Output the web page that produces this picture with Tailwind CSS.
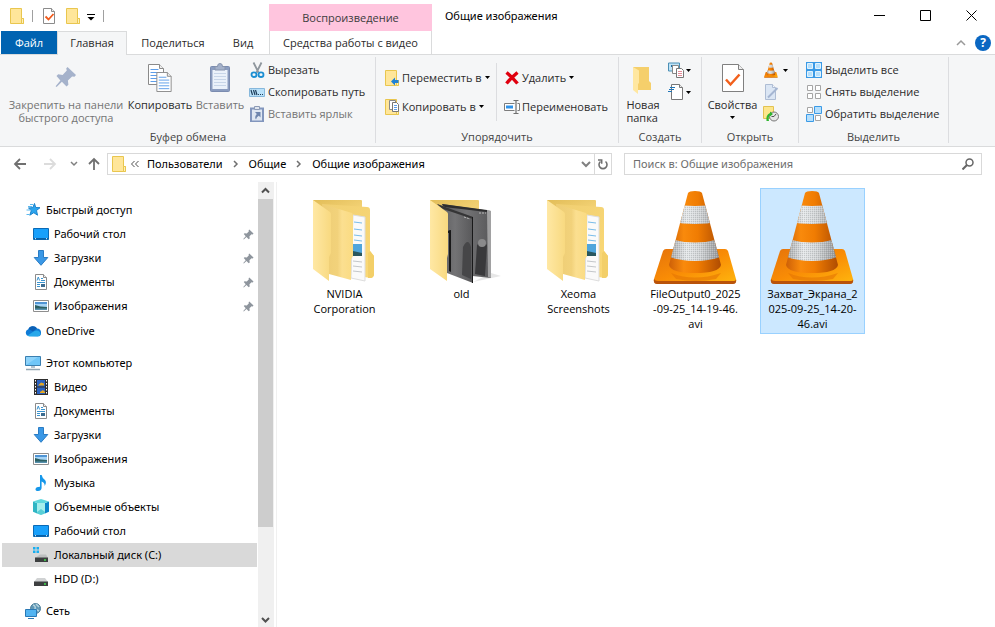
<!DOCTYPE html>
<html lang="ru">
<head>
<meta charset="utf-8">
<title>Общие изображения</title>
<script src="https://cdn.jsdelivr.net/npm/@tailwindcss/browser@4"></script>
</head>
<body class="h-screen flex flex-col bg-white text-black text-[11px] leading-4 overflow-hidden font-['Open_Sans','Noto_Sans',sans-serif]">

<svg class="absolute size-0" aria-hidden="true">
  <defs>
    <linearGradient id="gFold" x1="0" y1="0" x2="1" y2="1"><stop offset="0" stop-color="#f0cf72"/><stop offset="1" stop-color="#fbd976"/></linearGradient>
    <linearGradient id="gLeaf" x1="0" y1="0" x2="1" y2="0"><stop offset="0" stop-color="#ffe8a4"/><stop offset="1" stop-color="#f8d980"/></linearGradient>
    <linearGradient id="gMid" x1="0" y1="0" x2="1" y2="0"><stop offset="0" stop-color="#eecd74"/><stop offset=".5" stop-color="#f2d27b"/><stop offset=".65" stop-color="#fbdf90"/><stop offset="1" stop-color="#fadb82"/></linearGradient>
    <linearGradient id="gBack" x1="0" y1="0" x2="1" y2="1"><stop offset="0" stop-color="#e2bd58"/><stop offset="1" stop-color="#fbdc83"/></linearGradient>
    <linearGradient id="gOr" x1="0" y1="0" x2="1" y2="0"><stop offset="0" stop-color="#c75a07"/><stop offset=".3" stop-color="#f98a0c"/><stop offset=".55" stop-color="#f07c02"/><stop offset="1" stop-color="#a94802"/></linearGradient>
    <linearGradient id="gWh" x1="0" y1="0" x2="1" y2="0"><stop offset="0" stop-color="#9a9c9e"/><stop offset=".35" stop-color="#e4e7e9"/><stop offset=".6" stop-color="#cfd2d4"/><stop offset="1" stop-color="#85878a"/></linearGradient>
    <linearGradient id="gBase" x1="0" y1="0" x2="1" y2="1"><stop offset="0" stop-color="#e5730c"/><stop offset=".5" stop-color="#f98c05"/><stop offset="1" stop-color="#ffb60e"/></linearGradient>
    <linearGradient id="gPhoto" x1="0" y1="0" x2="1" y2="0"><stop offset="0" stop-color="#59595b"/><stop offset=".5" stop-color="#737375"/><stop offset="1" stop-color="#58585a"/></linearGradient>
    <pattern id="mesh" width="2" height="2" patternUnits="userSpaceOnUse"><rect width="1" height="1" fill="#77797b" opacity=".28"/><rect x="1" y="1" width="1" height="1" fill="#fff" opacity=".25"/></pattern>
    <clipPath id="coneClip"><path d="M41 4Q42 2 48 2T55 4L74 76Q72 84 48 84T22 76Z"/></clipPath>

    <symbol id="i-folder" viewBox="0 0 16 16"><path d="M1.5.5h11v10h2v5h-13z" fill="#ffe69a" stroke="#e9c64e"/><path d="M12.5 15.500v-5h2v5z" fill="#fff0b8" stroke="#e9c64e"/></symbol>
    <symbol id="i-check" viewBox="0 0 16 16"><path d="M2.500.5h8l3 3v12h-11z" fill="#fff" stroke="#8b8b8b"/><path d="M10.500.5v3h3" fill="#eee" stroke="#8b8b8b"/><path d="M4.500 8.500l3 3 5-5.500" fill="none" stroke="#f05a1c" stroke-width="1.800"/></symbol>
    <symbol id="i-pin" viewBox="0 0 22 22"><path d="M12.500 1l8.500 8-1.500 1.800-2.400-.4-4.200 4.200.5 4.200-1.900 1.600-4.600-4.600L1.600 21 .6 20.200l4.800-5.700L1.500 10l1.700-1.700 4.400.6 4.200-4.300-.6-2.200z"/></symbol>
    <symbol id="i-paper" viewBox="0 0 16 21"><path d="M.5.5h11l4 4v16H.5z" fill="#fff" stroke="#8a8a8a"/><path d="M11.500.5v4h4" fill="#eee" stroke="#8a8a8a"/><path d="M2.500 5.500h8M2.500 8.500h11M2.500 11.500h11M2.500 14.500h11M2.500 17.500h11" stroke="#5d9eea"/></symbol>
    <symbol id="i-clip" viewBox="0 0 20 29"><rect x=".5" y="3.500" width="19" height="25" rx="1" fill="#8b9dc0" stroke="#7b8cb0"/><path d="M2.500 7h15v19h-15z" fill="#eaf1fa"/><path d="M4 10.500h12M4 13.500h12M4 16.500h12M4 19.500h12M4 22.500h12" stroke="#c7d5e8"/><path d="M5 7V3.500h2.500a2.500 3 0 0 1 5 0H15V7z" fill="#a4b1ca" stroke="#8794ae"/></symbol>
    <symbol id="i-cut" viewBox="0 0 16 16"><path d="M4.500.5l5 10M12.500.5l-5 10" stroke="#8f979e" stroke-width="1.800" fill="none"/><ellipse cx="5" cy="12.700" rx="2.500" ry="2.300" fill="none" stroke="#1b8ed2" stroke-width="1.800"/><ellipse cx="12" cy="12.700" rx="2.500" ry="2.300" fill="none" stroke="#1b8ed2" stroke-width="1.800"/></symbol>
    <symbol id="i-path" viewBox="0 0 16 16"><path d="M.5 4.500h15v8H.5z" fill="#b9e1fa" stroke="#87b8dc"/><path d="M2 6l1.500 5M4.500 6L6 11M6.500 6L8 11" stroke="#1f3f5c" stroke-width="1.200"/><path d="M9 10.500h1M11 10.500h1M13 10.500h1" stroke="#1f3f5c"/></symbol>
    <symbol id="i-short" viewBox="0 0 16 16"><path d="M2 2.500h12v13H2z" fill="#dfe7f2" stroke="#8296bd" stroke-width="2"/><path d="M5.500.5h5v3h-5z" fill="#dfe5ee" stroke="#8c9ab5"/><path d="M6 6h5.500v5.500L9.800 9.800Q7.500 11 7 13.500 5 11 7.800 7.900z" fill="#6f86ae"/></symbol>
    <symbol id="i-move" viewBox="0 0 16 16"><use href="#i-folder" width="16" height="16" x="-1"/><path d="M6 11.500l4-4v2.500h3.500v3H10v2.500z" fill="#1f82d4"/></symbol>
    <symbol id="i-copyto" viewBox="0 0 16 16"><use href="#i-folder" width="16" height="16" x="-1"/><path d="M4.500 1.500h6v9h-6z" fill="#fff" stroke="#8a8a8a"/><path d="M7.500 3.500h4l2 2v7h-6z" fill="#fff" stroke="#777"/><path d="M9 6.500h3M9 8.500h3M9 10.500h3" stroke="#5d9eea"/></symbol>
    <symbol id="i-del" viewBox="0 0 16 16"><path d="M2.500 2.500Q8 7 13.500 13.500M13.500 2.500Q8 7 2.500 13.500" fill="none" stroke="#e0000f" stroke-width="3.400"/></symbol>
    <symbol id="i-ren" viewBox="0 0 16 16"><path d="M10.500 4.500H.5v7h10M13.500 4.500h2v7h-2" fill="#fff" stroke="#7c7c7c"/><path d="M2 6.500h7v3H2z" fill="#2f93ea"/><path d="M9.500 1.500h5M9.500 14.500h5M12 1.500v13" stroke="#707070" stroke-width="1.200"/></symbol>
    <symbol id="i-newf" viewBox="0 0 20 28"><path d="M0 1h16v14l2 2v7H5z" fill="#f5cf6b"/><path d="M0 1l6 3.500V17l-1 1v10l-5-4z" fill="#ffe7a0"/></symbol>
    <symbol id="i-newitem" viewBox="0 0 16 16"><path d="M.5 1h11v8H.500z" fill="#bfe3f6" stroke="#4b8fb5"/><path d="M3 4h6" stroke="#1f6fa5" stroke-width="2"/><path d="M4.500 3.500h6v8h-6z" fill="#fff" stroke="#888"/><path d="M8.500 6.500h5l2 2v7h-7z" fill="#fff" stroke="#777"/><path d="M10 9.500h4M10 11.500h4M10 13.500h4" stroke="#e48b98"/></symbol>
    <symbol id="i-easy" viewBox="0 0 16 16"><path d="M3.500.5h8l3 3v12h-11z" fill="#fff" stroke="#777"/><path d="M11.500.5v3h3" fill="#eee" stroke="#777"/><path d="M2 3.500h5M1 5.500h5M0 7.500h4" stroke="#2176b8"/></symbol>
    <symbol id="i-edit" viewBox="0 0 16 16"><path d="M2.500.5h7l3 3v12h-10z" fill="#dbe6f4" stroke="#aebdd4"/><path d="M9.500.5v3h3" fill="#f5f8fc" stroke="#aebdd4"/><path d="M5 13.500L14.500 4" stroke="#a5b6d2" stroke-width="2"/></symbol>
    <symbol id="i-hist" viewBox="0 0 16 16"><path d="M.5.5h10v12H.500z" fill="#fde68c" stroke="#e2c252"/><circle cx="11" cy="10.500" r="4.500" fill="#e6e6e6" stroke="#777"/><path d="M11 10.500l2-2.500M11 10.500H8.500" stroke="#555"/><path d="M3.500 15Q2.500 9 7 7V5.500L10 8l-3 2.500V9Q5 11 6 15z" fill="#2fb52f"/></symbol>
    <symbol id="i-all" viewBox="0 0 16 16"><path d="M0 0h16v16H0z" fill="#3a9ae6"/><path d="M1.500 1.500h5v5h-5zM9.500 1.500h5v5h-5zM1.500 9.500h5v5h-5zM9.500 9.500h5v5h-5z" fill="#b5dffc" stroke="#e2f3fd"/></symbol>
    <symbol id="i-none" viewBox="0 0 16 16"><path d="M1.500 1.500h5v5h-5zM9.500 1.500h5v5h-5zM1.500 9.500h5v5h-5zM9.500 9.500h5v5h-5z" fill="#fff" stroke="#a5a5a5"/></symbol>
    <symbol id="i-inv" viewBox="0 0 16 16"><path d="M1.500 1.500h5v5h-5zM9.500 9.500h5v5h-5z" fill="#fff" stroke="#a5a5a5"/><path d="M8.500.5h7v7h-7zM.5 8.500h7v7h-7z" fill="#b5dffc" stroke="#3a9ae6"/></symbol>

    <symbol id="i-star" viewBox="0 0 16 16"><path d="M9.500 1.500l1.200 4 4.300.2-3.500 2.800 1 4.700-3.700-2.500-4 2.500 1.500-4.600L3.500 6l4.300-.4z" fill="#2ba5ee" stroke="#1a82cc"/><path d="M3 4.500h4M1.500 8h4M1.500 12.500h3M5 2.500h3" stroke="#5cb9ee"/></symbol>
    <symbol id="i-desk" viewBox="0 0 16 16"><path d="M.5 2.500h15v11H.5z" fill="#18a0fb" stroke="#0a6ab6"/><path d="M1 12h14v1.500H1z" fill="#0860a6"/><path d="M2 12.700h1M13 12.700h1" stroke="#fff"/></symbol>
    <symbol id="i-down" viewBox="0 0 16 16"><path d="M5.500.5h5v7h4.300L8 15.300 1.200 7.500h4.300z" fill="#3a98e6" stroke="#2a7cc4"/></symbol>
    <symbol id="i-doc" viewBox="0 0 16 16"><path d="M2.500.5h8l3 3v12h-11z" fill="#fff" stroke="#8b8b8b"/><path d="M10.500.5v3h3" fill="#eee" stroke="#8b8b8b"/><path d="M4 6.500l1.300-3.500L6.600 6.500M8 4.500h2M8 6.500h4M4 8.500h8M4 10.500h3M4 12.500h3" fill="none" stroke="#3b94cf"/><path d="M8 10h4v3H8z" fill="#3c6c90"/></symbol>
    <symbol id="i-img" viewBox="0 0 16 16"><path d="M.5 2.500h15v11H.5z" fill="#fff" stroke="#8e8e8e"/><path d="M2 4h12v8H2z" fill="#a5d3f5"/><path d="M2 4h12v2H2z" fill="#4f94d4"/><path d="M2 7q5 2 12 2v3H2z" fill="#2c6063"/><path d="M2 10.500h12V12H2z" fill="#5791ae"/></symbol>
    <symbol id="i-cloud" viewBox="0 0 16 16"><path d="M4 13a3.500 3.500 0 0 1-.8-6.800A5 5 0 0 1 12 5.500a4 4 0 0 1 4 4.500 3.200 3.200 0 0 1-3 3.300z" fill="#0f7bd6"/><path d="M3.500 6A5 5 0 0 1 12 5.300L8 8.500z" fill="#0c5fb4"/><path d="M2.500 12.500L9.500 8a4 4 0 0 1 6 3q-.5 2.400-2.800 2.400H4z" fill="#28a8ea"/></symbol>
    <symbol id="i-pc" viewBox="0 0 16 16"><path d="M.5 1.500h15v9H.5z" fill="#6fc6f8" stroke="#3a7fb0"/><path d="M1 10V2h12z" fill="#a3dcfb" opacity=".6"/><path d="M6 11h4v2H6z" fill="#b3c3cf"/><path d="M1 14.500h14" stroke="#93a6b3" stroke-width="1.500"/></symbol>
    <symbol id="i-vid" viewBox="0 0 16 16"><path d="M1 0h14v16H1z" fill="#2e2e2e"/><path d="M4 1h8v6.500H4zM4 8.500h8V15H4z" fill="#2b62c0"/><path d="M5 6.500l3-3 3 1v2zM7 13l3-2 2 2v1H7z" fill="#e6a821"/><path d="M2.500 1v15M13.500 1v15" stroke="#fff" stroke-dasharray="1.500 1.500"/></symbol>
    <symbol id="i-mus" viewBox="0 0 16 16"><path d="M7 0h1.600q.6 3 3.400 5 2 2.500-.4 6 .4-3.500-3-4.600V13q-.3 2.800-3.600 3-2.700 0-2.500-2 .6-2.200 4.500-2.200z" fill="#1597ea"/></symbol>
    <symbol id="i-cube" viewBox="0 0 16 16"><path d="M0 2.500L4 4v10.500l-4-1.700z" fill="#2fb5c4"/><path d="M12 4l4-1.500v10.300L12 14.500z" fill="#0a84c8"/><path d="M0 2.500L8 0l8 2.500-4 1.500H4z" fill="#5fd8de"/><path d="M4 4h8v9.500L8 16l-4-2z" fill="#a6eeec"/><path d="M4 13l4-3 4 3v1.500L8 16l-4-1.500z" fill="#58cfd6"/></symbol>
    <symbol id="i-drive" viewBox="0 0 16 16"><path d="M4 7h8l3 4H1z" fill="#d0d2d3"/><path d="M1 10.500h14V15H1z" fill="#3d3f40"/><path d="M11 13h2" stroke="#41e04e" stroke-width="1.500"/></symbol>
    <symbol id="i-win" viewBox="0 0 16 16"><path d="M0 0h2.500v2.500H0zM3.500 0H6v2.500H3.500zM0 3.500h2.500V6H0zM3.500 3.500H6V6H3.500z" fill="#18aef0"/><path d="M7 7.500h6l2 3.500H2z" fill="#bdbfc0"/><path d="M2 10.500h13V15H2z" fill="#3d3f40"/><path d="M11 13h2" stroke="#41e04e" stroke-width="1.500"/></symbol>
    <symbol id="i-net" viewBox="0 0 16 16"><circle cx="10.500" cy="5.500" r="5" fill="#5f97b5" stroke="#4d7f9a"/><path d="M8 2q3 1 2 4l4 2M11 1l3 3" stroke="#b5d3de" stroke-width="1.500" fill="none"/><path d="M.5 6.500h11v7H.5z" fill="#52b4f2" stroke="#2a78b4"/><path d="M3 15.500h6" stroke="#2a78b4"/></symbol>

    <symbol id="i-cone" viewBox="0 0 97 97">
      <path d="M19 60h59q2 0 3 2l8 28q1 4-3 4H10q-4 0-3-4l9-28q1-2 3-2z" fill="url(#gBase)"/>
      <path d="M7 90q1 2 4 2h75q3 0 3-2 1 5-3 5H10q-4 0-3-5z" fill="#b9530a"/>
      <path d="M24 84q23 9 50 0l-5 6q-20 4-40 0z" fill="#e57504" opacity=".6"/>
      <g clip-path="url(#coneClip)"><path d="M20 0h56v86H20z" fill="url(#gOr)"/>
      <path d="M20 15q28 4 56 0v17q-28 6-56 0z" fill="url(#gWh)"/><path d="M20 49q28 9 56 0v18q-28 10-56 0z" fill="url(#gWh)"/>
      <path d="M20 15q28 4 56 0v17q-28 6-56 0zM20 49q28 9 56 0v18q-28 10-56 0z" fill="url(#mesh)"/></g>
    </symbol>
    <symbol id="i-docs" viewBox="0 0 97 97">
      <path d="M17 11h48q1 0 1 1v20H17z" fill="url(#gBack)"/>
      <path d="M26 15l45 3q3 0 3 3v41l4 5v18q0 3-3 4l-20-3z" fill="url(#gFold)"/>
      <path d="M74 62l4 5v18q0 3-3 4l-3 0V64z" fill="#f3cf68"/>
      <path d="M57 26l12 2v64l-14-3z" fill="#fafafa" stroke="#ddd"/>
      <path d="M58 33l8 1M58 40l8 1M58 46l8 1M58 51l8 1" stroke="#79bce9"/><path d="M57 55h9v12h-9z" fill="#4fa5dc"/><path d="M57 62l9 2v3h-9z" fill="#29575f"/><path d="M57 72l9 1M57 77l9 1M57 82l9 1" stroke="#c4c7ca"/>
      <path d="M26 15l30 9q1 1 1 3v40l-2 3v21l-22-6z" fill="url(#gMid)"/>
      <path d="M17 11l17 12q1 1 1 2v39l-2 4v24L17 80z" fill="url(#gLeaf)"/>
    </symbol>
    <symbol id="i-photos" viewBox="0 0 97 97">
      <path d="M60 93l28-6-10-3z" fill="#ddd" opacity=".7"/>
      <path d="M17 11h48q1 0 1 1v20H17z" fill="url(#gBack)"/>
      <path d="M29 15l49 7v67l-28-3z" fill="url(#gPhoto)"/><path d="M74 21l4 1v67l-3-1z" fill="#a1a1a2"/>
      <path d="M29 15l45 6v2l-43-5z" fill="#2d2d2e"/><path d="M64 56q5-6 10 0l-2 31-10-2z" fill="#39393b"/><circle cx="69" cy="54" r="4" fill="#8a8a8b"/><path d="M66 24h7" stroke="#bbb" stroke-dasharray="2 1"/>
      <path d="M24 15l36 13v66L34 84V25z" fill="url(#gPhoto)"/><path d="M24 15l36 13v2L30 20z" fill="#353536"/><path d="M34 45q0-4 4-4v42l-2-1V44h-2zM59 28h1v66h-1z" fill="#19191a"/>
      <path d="M50 58q5-10 8 0v32l-9-4z" fill="#464648"/><path d="M51 28l6 2" stroke="#bbb" stroke-dasharray="2 1"/>
      <path d="M17 11l17 12q1 1 1 2v40l-1 4v23L17 80z" fill="url(#gLeaf)"/>
    </symbol>
  </defs>
</svg>

<header class="grid grid-cols-[268px_164px_1fr] grid-rows-[31px_23px]">
  <div class="flex items-center gap-2 pl-[9px] [&_svg]:size-4">
    <button aria-label="Меню окна"><svg><use href="#i-folder"/></svg></button>
    <span class="-ml-px h-3 w-px bg-[#a0a0a0]"></span>
    <button aria-label="Свойства"><svg><use href="#i-check"/></svg></button>
    <button aria-label="Новая папка"><svg><use href="#i-folder"/></svg></button>
    <button aria-label="Настройка панели быстрого доступа" class="-ml-1.5"><svg viewBox="0 0 16 16"><path d="M4 6.500h8" stroke="#000"/><path d="M4.500 9h7L8 12.500z"/></svg></button>
    <span class="-ml-1 h-3 w-px bg-[#a0a0a0]"></span>
  </div>
  <div class="mt-1 ml-px flex items-center justify-center bg-[#ffc5de] text-[#3c3c3c] pt-px">Воспроизведение</div>
  <div class="flex pr-px">
    <h1 class="flex-1 self-center pl-[13px] font-['Noto_Sans']">Общие изображения</h1>
    <button aria-label="Свернуть" class="flex w-[46px] items-center justify-center"><svg class="size-[11px]" viewBox="0 0 11 11"><path d="M0 5.500h11" stroke="#000"/></svg></button>
    <button aria-label="Развернуть" class="flex w-[46px] items-center justify-center"><svg class="size-[11px]" viewBox="0 0 11 11"><path d="M.5.5h10v10H.5z" fill="none" stroke="#000"/></svg></button>
    <button aria-label="Закрыть" class="flex w-[46px] items-center justify-center"><svg class="size-[11px]" viewBox="0 0 11 11"><path d="M.5.500l10 10M10.500.500l-10 10" stroke="#000"/></svg></button>
  </div>
  <nav class="flex pl-px text-[#2b2b2b]">
    <button class="w-14 bg-[#0063b1] text-white">Файл</button>
    <button class="relative -mb-px w-[70px] border border-b-0 border-[#dadbdc] bg-[#f5f6f7] pb-px">Главная</button>
    <button class="w-[92px]">Поделиться</button>
    <button class="w-12">Вид</button>
  </nav>
  <button class="ml-px border-x border-[#dadbdc] text-[#2b2b2b]">Средства работы с видео</button>
  <div class="flex items-center justify-end gap-2 pr-1">
    <button aria-label="Свернуть ленту"><svg class="size-3" viewBox="0 0 12 12"><path d="M2 8l4-4 4 4" fill="none" stroke="#999" stroke-width="1.500"/></svg></button>
    <button aria-label="Справка" class="flex size-4 items-center justify-center rounded-full bg-[#0a67c2] text-[12px] font-bold text-white">?</button>
  </div>
</header>

<section aria-label="Главная" class="flex border-y border-[#dadbdc] bg-[#f5f6f7] pl-px pt-0.5 pb-[3px] text-[#2b2b2b] [&_button]:whitespace-nowrap [&_h2]:text-center [&_h2]:leading-[13px] [&_h2]:text-[#444]">
  <div class="flex w-[375px] flex-col border-r border-[#dcdde0]">
    <div class="flex h-[73px] pl-[3px]">
      <button class="flex w-[124px] flex-col items-center pt-1 text-[#747474] leading-[13px]"><svg class="mt-[5px] mb-[10px] size-[22px] fill-[#a5b2cb]"><use href="#i-pin"/></svg>Закрепить на панели<br>быстрого доступа</button>
      <button class="flex w-16 flex-col items-center pt-1 leading-[13px]"><svg class="mt-px mb-1 h-8 w-6" viewBox="0 0 24 32"><use href="#i-paper" x="0" y="2" width="16" height="21"/><use href="#i-paper" x="8" y="10" width="16" height="20"/></svg>Копировать</button>
      <button class="flex w-14 flex-col items-center pt-1 text-[#747474] leading-[13px]"><svg class="mt-px mb-1 h-8 w-5" viewBox="0 0 20 32"><use href="#i-clip" y="1" width="20" height="29"/></svg>Вставить</button>
      <div class="flex flex-col pt-0.5 pl-px [&_button]:flex [&_button]:h-[22px] [&_button]:items-center [&_button]:gap-[3px] [&_svg]:size-4">
        <button><svg><use href="#i-cut"/></svg>Вырезать</button>
        <button><svg><use href="#i-path"/></svg>Скопировать путь</button>
        <button class="text-[#747474]"><svg><use href="#i-short"/></svg>Вставить ярлык</button>
      </div>
    </div>
    <h2>Буфер обмена</h2>
  </div>
  <div class="flex w-[243px] flex-col border-r border-[#dcdde0]">
    <div class="flex h-[73px] items-start pt-1.5 [&_button]:flex [&_button]:h-[29px] [&_button]:items-center">
      <div class="w-[121px] border-r border-[#dcdde0] pl-[9px]">
        <button><svg class="mr-px size-4"><use href="#i-move"/></svg>Переместить в<svg class="ml-[3px] h-[3px] w-[5px]" viewBox="0 0 5 3"><path d="M0 0h5L2.500 3z"/></svg></button>
        <button><svg class="mr-px size-4"><use href="#i-copyto"/></svg>Копировать в<svg class="ml-[3px] h-[3px] w-[5px]" viewBox="0 0 5 3"><path d="M0 0h5L2.500 3z"/></svg></button>
      </div>
      <div class="pl-[7px]">
        <button><svg class="mr-0.5 size-4"><use href="#i-del"/></svg>Удалить<svg class="ml-[3px] h-[3px] w-[5px]" viewBox="0 0 5 3"><path d="M0 0h5L2.500 3z"/></svg></button>
        <button><svg class="mr-0.5 size-4"><use href="#i-ren"/></svg>Переименовать</button>
      </div>
    </div>
    <h2>Упорядочить</h2>
  </div>
  <div class="flex w-[83px] flex-col border-r border-[#dcdde0]">
    <div class="flex h-[73px]">
      <button class="flex w-12 flex-col items-center pt-1 leading-[13px]"><svg class="mt-[5px] mb-1 h-7 w-5"><use href="#i-newf"/></svg><span class="text-left">Новая<br>папка</span></button>
      <div class="pt-0.5 pl-px [&_button]:flex [&_button]:h-[22px] [&_button]:items-center [&_button]:gap-0.5">
        <button aria-label="Создать элемент"><svg class="size-4"><use href="#i-newitem"/></svg><svg class="h-[3px] w-[5px]" viewBox="0 0 5 3"><path d="M0 0h5L2.500 3z"/></svg></button>
        <button aria-label="Простой доступ"><svg class="size-4"><use href="#i-easy"/></svg><svg class="h-[3px] w-[5px]" viewBox="0 0 5 3"><path d="M0 0h5L2.500 3z"/></svg></button>
      </div>
    </div>
    <h2>Создать</h2>
  </div>
  <div class="flex w-[97px] flex-col border-r border-[#dcdde0]">
    <div class="flex h-[73px]">
      <button class="flex w-[61px] flex-col items-center pt-1 leading-[13px]"><svg class="mt-px mb-1 h-8 w-[22px]" viewBox="0 0 22 32"><path d="M.5 2.500h16l5 5v22H.5z" fill="#fff" stroke="#808080"/><path d="M16.500 2.500v5h5" fill="#eee" stroke="#808080"/><path d="M4 17.500l4.500 5 9-10" fill="none" stroke="#f2601c" stroke-width="2.500"/></svg>Свойства<svg class="mt-[5px] h-[3px] w-[5px]" viewBox="0 0 5 3"><path d="M0 0h5L2.500 3z"/></svg></button>
      <div class="pt-0.5 [&_button]:flex [&_button]:h-[22px] [&_button]:items-center [&_button]:gap-1">
        <button aria-label="Открыть"><svg class="size-4"><use href="#i-cone"/></svg><svg class="h-[3px] w-[5px]" viewBox="0 0 5 3"><path d="M0 0h5L2.500 3z"/></svg></button>
        <button aria-label="Изменить"><svg class="size-4"><use href="#i-edit"/></svg></button>
        <button aria-label="Журнал"><svg class="size-4"><use href="#i-hist"/></svg></button>
      </div>
    </div>
    <h2>Открыть</h2>
  </div>
  <div class="flex w-[150px] flex-col border-r border-[#dcdde0]">
    <div class="h-[73px] pt-0.5 pl-[7px] [&_button]:flex [&_button]:h-[22px] [&_button]:items-center [&_button]:gap-[3px] [&_svg]:size-4">
      <button><svg><use href="#i-all"/></svg>Выделить все</button>
      <button><svg><use href="#i-none"/></svg>Снять выделение</button>
      <button><svg><use href="#i-inv"/></svg>Обратить выделение</button>
    </div>
    <h2>Выделить</h2>
  </div>
</section>

<div class="flex items-center gap-3 py-1.5 pr-[13px] pl-3 font-['Noto_Sans']">
  <div class="flex w-[83px] items-center">
    <button aria-label="Назад"><svg class="size-4" viewBox="0 0 16 16"><path d="M14 8H3M8 3L3 8l5 5" fill="none" stroke="#707070" stroke-width="1.800"/></svg></button>
    <button aria-label="Вперёд" class="ml-3.5"><svg class="size-4" viewBox="0 0 16 16"><path d="M2 8h11M8 3l5 5-5 5" fill="none" stroke="#dcdcdc" stroke-width="1.800"/></svg></button>
    <button aria-label="Последние расположения" class="ml-3"><svg class="size-2" viewBox="0 0 8 8"><path d="M1 2l3 3 3-3" fill="none" stroke="#808080" stroke-width="1.500"/></svg></button>
    <button aria-label="Вверх" class="ml-2"><svg class="size-4" viewBox="0 0 16 16"><path d="M8 14V3M3 8l5-5 5 5" fill="none" stroke="#707070" stroke-width="1.800"/></svg></button>
  </div>
  <div class="flex h-[22px] flex-[503] items-center border border-[#d9d9d9]">
    <svg class="ml-[3px] size-4"><use href="#i-folder"/></svg>
    <svg class="ml-1 size-2" viewBox="0 0 8 8"><path d="M3.500 1l-3 3 3 3M7.500 1l-3 3 3 3" fill="none" stroke="#505050"/></svg>
    <a href="#" class="ml-2">Пользователи</a>
    <svg class="ml-[9px] size-2" viewBox="0 0 8 8"><path d="M2 1l3 3-3 3" fill="none" stroke="#707070" stroke-width="1.500"/></svg>
    <a href="#" class="ml-[9px]">Общие</a>
    <svg class="ml-[9px] size-2" viewBox="0 0 8 8"><path d="M2 1l3 3-3 3" fill="none" stroke="#707070" stroke-width="1.500"/></svg>
    <a href="#" class="ml-[9px]">Общие изображения</a>
    <button aria-label="Предыдущие расположения" class="ml-auto px-0.5"><svg class="size-3" viewBox="0 0 12 12"><path d="M2 4l4 4 4-4" fill="none" stroke="#808080" stroke-width="2"/></svg></button>
    <button aria-label="Обновить" class="self-stretch border-l border-[#d9d9d9] px-0.5"><svg class="size-3" viewBox="0 0 12 12"><path d="M3.500 3.500A4 4 0 1 0 8.500 3.500" fill="none" stroke="#707070" stroke-width="1.600"/><path d="M1 2h3.700v3.700" fill="none" stroke="#707070" stroke-width="1.500"/></svg></button>
  </div>
  <div class="flex h-[22px] flex-[341] items-center border border-[#d9d9d9] pr-[7px] pl-2">
    <input type="text" aria-label="Поиск" placeholder="Поиск в: Общие изображения" class="min-w-0 flex-1 outline-none placeholder:text-[#6d6d6d]">
    <svg class="size-3" viewBox="0 0 12 12"><circle cx="7.500" cy="4.500" r="3.500" fill="none" stroke="#666" stroke-width="1.500"/><path d="M5 7L.5 11.500" stroke="#666" stroke-width="2"/></svg>
  </div>
</div>

<main class="flex min-h-0 flex-1 pt-px">
  <nav class="flex w-[258px] flex-col pt-4 pl-0.5 pr-px font-['Noto_Sans'] [&_a]:flex [&_a]:h-6 [&_a]:shrink-0 [&_a]:items-center [&_a]:gap-[5px] [&_a>svg:first-child]:size-4" aria-label="Область навигации">
    <a href="#" class="pl-[23px]"><svg><use href="#i-star"/></svg>Быстрый доступ</a>
    <a href="#" class="pl-[31px] pr-[3px]"><svg><use href="#i-desk"/></svg>Рабочий стол<svg class="ml-auto size-[11px] fill-[#8e959d]"><use href="#i-pin" width="11" height="11"/></svg></a>
    <a href="#" class="pl-[31px] pr-[3px]"><svg><use href="#i-down"/></svg>Загрузки<svg class="ml-auto size-[11px] fill-[#8e959d]"><use href="#i-pin" width="11" height="11"/></svg></a>
    <a href="#" class="pl-[31px] pr-[3px]"><svg><use href="#i-doc"/></svg>Документы<svg class="ml-auto size-[11px] fill-[#8e959d]"><use href="#i-pin" width="11" height="11"/></svg></a>
    <a href="#" class="pl-[31px] pr-[3px]"><svg><use href="#i-img"/></svg>Изображения<svg class="ml-auto size-[11px] fill-[#8e959d]"><use href="#i-pin" width="11" height="11"/></svg></a>
    <a href="#" class="mt-px pl-[23px]"><svg><use href="#i-cloud"/></svg>OneDrive</a>
    <a href="#" class="mt-2 pl-[23px]"><svg><use href="#i-pc"/></svg>Этот компьютер</a>
    <a href="#" class="pl-[31px]"><svg><use href="#i-vid"/></svg>Видео</a>
    <a href="#" class="pl-[31px]"><svg><use href="#i-doc"/></svg>Документы</a>
    <a href="#" class="pl-[31px]"><svg><use href="#i-down"/></svg>Загрузки</a>
    <a href="#" class="pl-[31px]"><svg><use href="#i-img"/></svg>Изображения</a>
    <a href="#" class="pl-[31px]"><svg><use href="#i-mus"/></svg>Музыка</a>
    <a href="#" class="pl-[31px]"><svg><use href="#i-cube"/></svg>Объемные объекты</a>
    <a href="#" class="pl-[31px]"><svg><use href="#i-desk"/></svg>Рабочий стол</a>
    <a href="#" class="bg-[#d9d9d9] pl-[31px]" aria-current="true"><svg><use href="#i-win"/></svg>Локальный диск (C:)</a>
    <a href="#" class="pl-[31px]"><svg><use href="#i-drive"/></svg>HDD (D:)</a>
    <a href="#" class="mt-2 pl-[23px]"><svg><use href="#i-net"/></svg>Сеть</a>
  </nav>
  <div class="flex w-4 flex-col items-center bg-[#f0f0f0]">
    <svg class="h-[17px] w-4 shrink-0" viewBox="0 0 16 17"><path d="M4 10.500l3.500-3.500 3.500 3.500" fill="none" stroke="#505050" stroke-width="2"/></svg>
    <div class="w-[15px] flex-[328] self-start bg-[#cdcdcd]"></div>
    <div class="flex-[83]"></div>
    <svg class="h-[17px] w-4 shrink-0" viewBox="0 0 16 17"><path d="M4 8l3.500 3.500L11 8" fill="none" stroke="#505050" stroke-width="2"/></svg>
  </div>
  <ul class="ml-0.5 grid flex-1 auto-rows-min grid-cols-[repeat(auto-fill,105px)] items-start gap-x-3 border-l border-[#f0f0f0] pt-1.5 pl-[15px] text-center leading-[15px] [&_li]:flex [&_li]:flex-col [&_li]:items-center [&_li]:border [&_li]:pb-0.5 [&_svg]:size-[97px]">
    <li class="border-transparent"><svg><use href="#i-docs"/></svg>NVIDIA<br>Corporation</li>
    <li class="border-transparent"><svg><use href="#i-photos"/></svg>old</li>
    <li class="border-transparent"><svg><use href="#i-docs"/></svg>Xeoma<br>Screenshots</li>
    <li class="border-transparent"><svg><use href="#i-cone"/></svg>FileOutput0_2025<br>-09-25_14-19-46.<br>avi</li>
    <li class="border-[#99d1ff] bg-[#cce8ff]"><svg><use href="#i-cone"/></svg>Захват_Экрана_2<br>025-09-25_14-20-<br>46.avi</li>
  </ul>
</main>
</body>
</html>
